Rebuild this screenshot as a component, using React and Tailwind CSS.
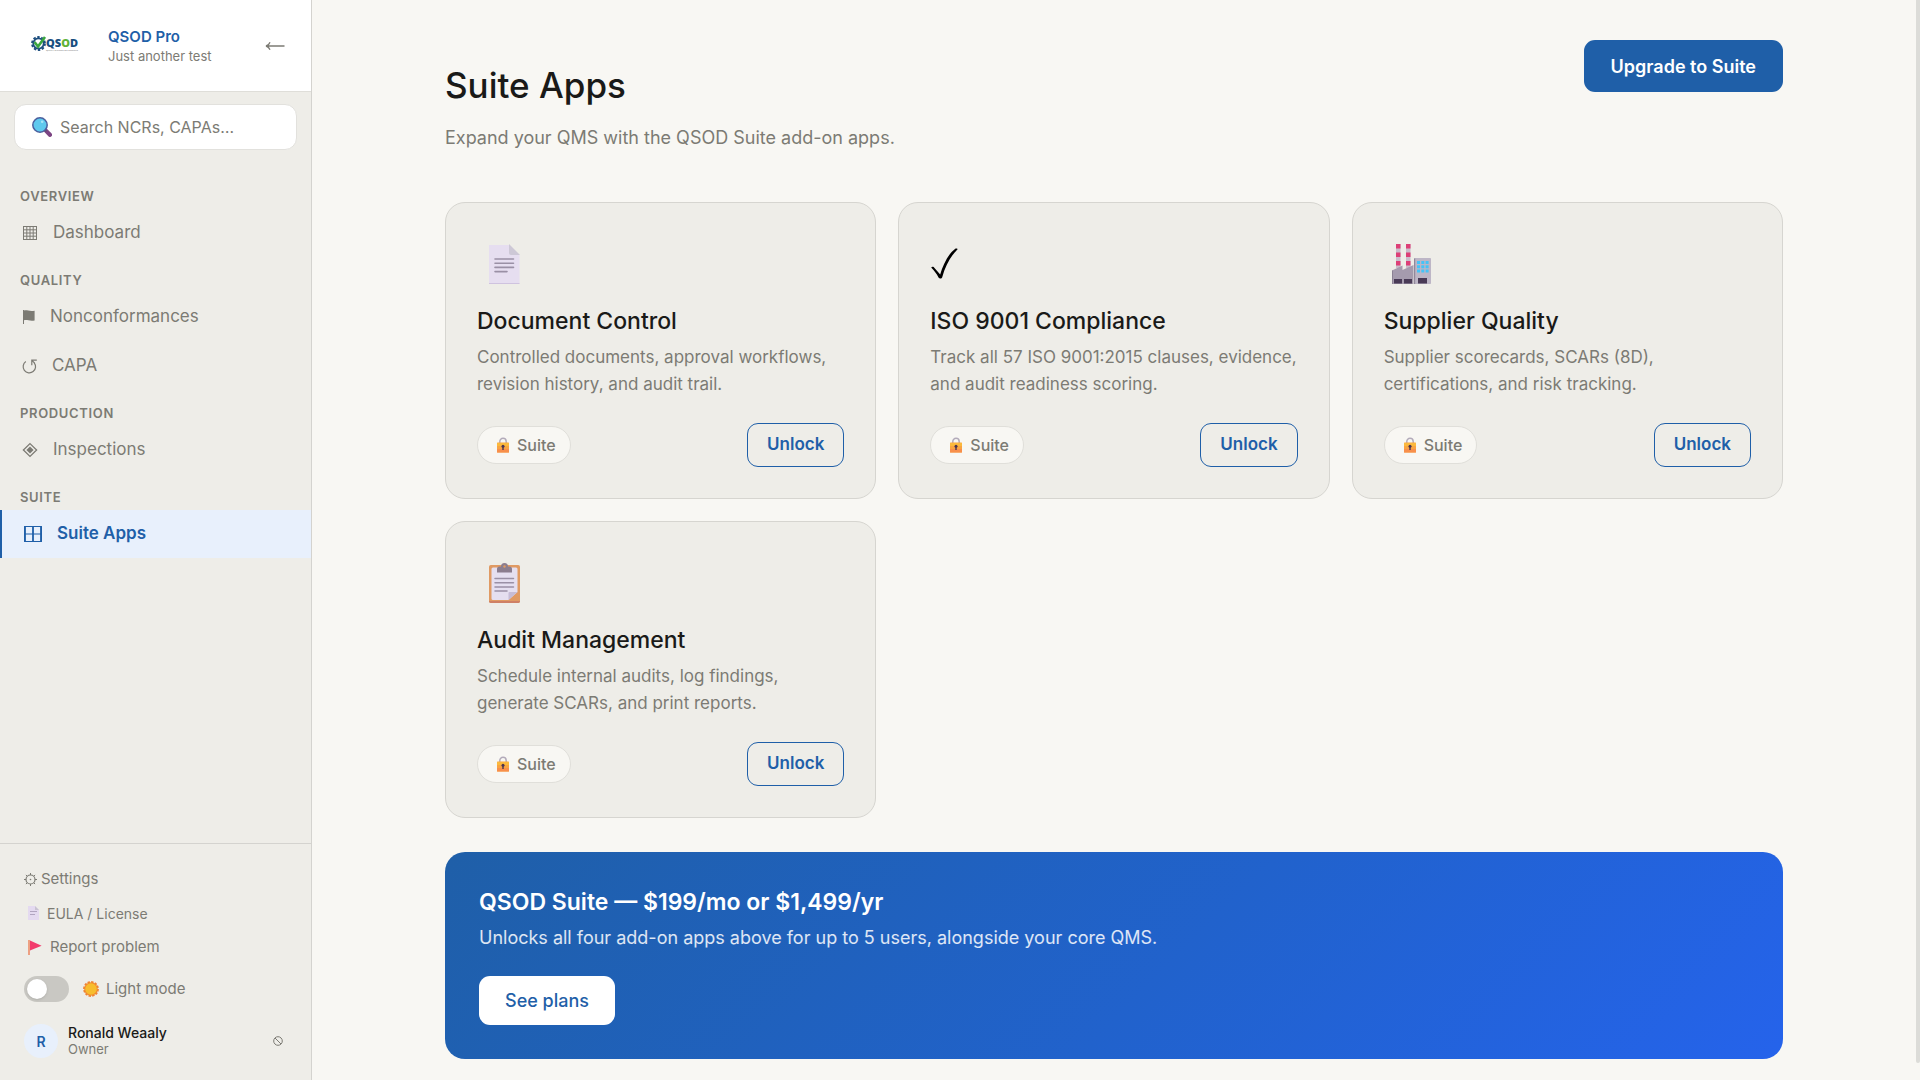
import { useState } from 'react';

/* ---------- Sidebar glyphs ---------- */

function GridGlyph() {
  return (
    <svg width="16" height="16" viewBox="0 0 16 16" fill="none" stroke="currentColor" aria-hidden="true">
      <rect x="1.5" y="1.5" width="13" height="13" />
      <path d="M4.8 1.5v13M8 1.5v13M11.2 1.5v13M1.5 4.8h13M1.5 8h13M1.5 11.2h13" />
    </svg>
  );
}

function FlagGlyph() {
  return (
    <svg width="13" height="16" viewBox="0 0 13 16" fill="currentColor" aria-hidden="true">
      <path d="M1 1h1v14H1z" />
      <path d="M2 1.600c3-.9 5 1.200 10.600.2v9.600c-5 1-7.600-1.100-10.600-.2z" />
    </svg>
  );
}

function LoopGlyph() {
  return (
    <svg width="15" height="16" viewBox="0 0 15 16" fill="none" stroke="currentColor" strokeWidth="1.2" aria-hidden="true">
      <path d="M3.800 3.600A6.200 6.200 0 1 0 12.200 4.800" />
      <path d="M14.800 2.200H9.800v5M9.800 2.200l3 3.200" />
    </svg>
  );
}

function DiamondGlyph() {
  return (
    <svg width="16" height="16" viewBox="0 0 16 16" aria-hidden="true">
      <path d="M8 1.600 14.600 8 8 14.400 1.400 8z" fill="none" stroke="currentColor" strokeWidth="1.300" />
      <path d="M8 4.400 11.600 8 8 11.600 4.400 8z" fill="currentColor" />
    </svg>
  );
}

function WindowGlyph() {
  return (
    <svg width="18" height="18" viewBox="0 0 18 18" fill="none" stroke="currentColor" aria-hidden="true">
      <path d="M.5 1.500h17v15H.5zM.5 9h17" />
      <path d="M1 1v16M9 1v16M17 1v16" strokeWidth="1.800" />
    </svg>
  );
}

function ArrowLeft() {
  return (
    <svg width="20" height="10" viewBox="0 0 20 10" fill="none" stroke="currentColor" strokeWidth="1.300" aria-hidden="true">
      <path d="M1 5h18.500M5 1.200C4.200 3.400 3 4.500 1 5c2 .5 3.200 1.600 4 3.800" />
    </svg>
  );
}

function GearGlyph() {
  return (
    <svg width="13" height="13" viewBox="0 0 13 13" fill="none" stroke="currentColor" aria-hidden="true">
      <circle cx="6.500" cy="6.500" r="4.500" strokeWidth="1.200" />
      <circle cx="6.500" cy="6.500" r=".8" fill="currentColor" stroke="none" />
      <path d="M6.500 0v2M6.500 11v2M0 6.500h2M11 6.500h2M1.900 1.900l1.400 1.400M9.700 9.700l1.400 1.400M1.900 11.100l1.400-1.400M9.700 3.300l1.400-1.400" />
    </svg>
  );
}

function NoEntryGlyph() {
  return (
    <svg width="10" height="10" viewBox="0 0 10 10" fill="none" stroke="currentColor" aria-hidden="true">
      <circle cx="5" cy="5" r="4.300" />
      <path d="M2 2l6 6" />
    </svg>
  );
}

/* ---------- Colour icons ---------- */

function Magnifier() {
  return (
    <svg width="20" height="20" viewBox="0 0 20 20" className="shrink-0" aria-hidden="true">
      <path d="M13 12.500l1.600-1 4.800 4.700a2.100 2.100 0 0 1-3 3.100l-4.500-4.900z" fill="#7c4483" />
      <path d="M12.200 12.200l2.200 2.200" stroke="#5c5070" strokeWidth="1.800" />
      <circle cx="8" cy="8" r="7.200" fill="#5fc9ee" stroke="#4a5f9e" strokeWidth="1.500" />
      <circle cx="10.200" cy="4.800" r="1.300" fill="#a8e6f8" />
    </svg>
  );
}

function PageIcon() {
  return (
    <svg width="31" height="40" viewBox="0 0 31 40" aria-hidden="true">
      <path d="M0 1h20l10.500 10v29H0z" fill="#e6def0" />
      <path d="M0 39h30.500v1H0z" fill="#cfc3df" />
      <path d="M20 0l11 11H22a2 2 0 0 1-2-2z" fill="#cdc8d6" />
      <path d="M6 15h18.500M6 19.200h18.500M6 23.400h18.500M6 27.600h12" stroke="#9a90a5" strokeWidth="1.600" strokeLinecap="round" />
    </svg>
  );
}

function SmallPage() {
  return (
    <svg width="11" height="14" viewBox="0 0 11 14" aria-hidden="true">
      <path d="M0 0h7l4 4v10H0z" fill="#e4daf0" />
      <path d="M7 0l4 4H7z" fill="#c9c3d2" />
      <path d="M2 5.500h7M2 8.500h5" stroke="#b1a5c0" strokeWidth="1.200" />
    </svg>
  );
}

function RedFlag() {
  return (
    <svg width="14" height="15" viewBox="0 0 14 15" aria-hidden="true">
      <path d="M0 0h2v15H0z" fill="#eda082" />
      <path d="M2 .5l11.600 5.200L2 10.600z" fill="#f23b6c" />
    </svg>
  );
}

function Sun() {
  return (
    <svg width="16" height="16" viewBox="0 0 16 16" aria-hidden="true">
      <circle cx="8" cy="8" r="7" fill="none" stroke="#ef8232" strokeWidth="1.800" strokeDasharray="2.400 1.260" />
      <circle cx="8" cy="8" r="6.800" fill="#f08a30" />
      <circle cx="8" cy="8" r="5.800" fill="#f7bd2e" />
    </svg>
  );
}

function Lock() {
  return (
    <svg width="12" height="16" viewBox="0 0 12 16" aria-hidden="true">
      <path d="M2.800 7V4.500a3.200 3.200 0 0 1 6.400 0V7" fill="none" stroke="#b3abba" strokeWidth="1.500" />
      <rect y="5.500" width="12" height="10" rx=".6" fill="#f9a441" />
      <path d="M0 12h12v3a.6.600 0 0 1-.6.500H.6A.6.600 0 0 1 0 15z" fill="#f88f4b" />
      <path d="M0 6h12v3H0z" fill="#fbb93c" />
      <circle cx="6" cy="9.300" r="1.500" fill="#4b3450" />
      <path d="M5.300 9.500h1.400v3.500H5.300z" fill="#4b3450" />
    </svg>
  );
}

function Check() {
  return (
    <svg width="28" height="40" viewBox="0 0 28 40" fill="#000" aria-hidden="true">
      <path d="M1.200 23.600c1-1.500 2.500-.8 3.300.3l5.700 6.700C13 20.700 18.500 9.500 25 4.900c1-.6 2.500-.3 2.600.3C21 11.500 15 22.500 12.300 32.900c-.6 1.900-2.900 1.900-3.800.5-1.800-3.200-4-6.600-7.300-9.800z" />
    </svg>
  );
}

function Factory() {
  return (
    <svg width="39" height="40" viewBox="0 0 39 40" aria-hidden="true">
      <path d="M4 0h4.500v24H4zM14 0h4.500v24H14z" fill="#c9bccb" />
      <path d="M4 0h4.500v4.500H4zM4 8.500h4.500V13H4zM4 17h4.500v4.500H4zM14 0h4.500v4.500H14zM14 8.500h4.500V13H14zM14 17h4.500v4.500H14z" fill="#dd3f77" />
      <path d="M0 26.500l10.500-5V26l11-5v19H0z" fill="#a59bae" />
      <path d="M0 26.500h1V40H0z" fill="#8b8194" />
      <rect x="22" y="14" width="17" height="26" rx=".8" fill="#bdb6c6" />
      <path d="M22 14.500h1.200V40H22z" fill="#91889b" />
      <path d="M25 17h3v3h-3zM29.300 17h3v3h-3zM33.600 17h3v3h-3zM25 21.200h3v3h-3zM29.300 21.200h3v3h-3zM33.600 21.200h3v3h-3zM25 25.400h3v3h-3zM29.300 25.400h3v3h-3zM33.600 25.400h3v3h-3z" fill="#45c3f7" />
      <path d="M2 35h8v4.500H2zM12 35h8v4.500h-8zM26 34h9v5.500h-9z" fill="#493a56" />
    </svg>
  );
}

function Clipboard() {
  return (
    <svg width="31" height="40" viewBox="0 0 31 40" aria-hidden="true">
      <rect y="2" width="31" height="38" rx="1.800" fill="#e09a63" />
      <path d="M0 38h31c0 1.300-.8 2-1.800 2H1.800C.8 40 0 39.300 0 38z" fill="#cf8065" />
      <path d="M2.500 6a1.500 1.500 0 0 1 1.500-1.500h23A1.500 1.500 0 0 1 28.500 6v23l-9 8H4a1.500 1.500 0 0 1-1.500-1.500z" fill="#e5dff0" />
      <path d="M28.500 29l-9 8v-7a1 1 0 0 1 1-1z" fill="#c6bcd6" />
      <path d="M8 9.500V6a2.500 2.500 0 0 1 2.500-2.500H12a3.500 3.500 0 0 1 7 0h1.500A2.500 2.500 0 0 1 23 6v3.500z" fill="#8b7d8e" />
      <circle cx="15.500" cy="3.500" r="1.200" fill="#e09a63" />
      <path d="M6 15.500h18.500M6 19.700h18.500M6 23.900h18.500M6 28.100h12" stroke="#9a90a5" strokeWidth="1.500" strokeLinecap="round" />
    </svg>
  );
}

function Logo() {
  return (
    <svg width="76" height="50" viewBox="0 0 76 50" className="bg-white" role="img" aria-label="QSOD">
      <circle cx="18.500" cy="22.500" r="6.500" fill="none" stroke="#1d4e7e" strokeWidth="1.800" strokeDasharray="2.500 1.580" />
      <circle cx="18.500" cy="22.500" r="5.200" fill="#fff" stroke="#1d4e7e" strokeWidth="1.800" />
      <path d="M14.500 21l3.500 4.500L25 16" fill="none" stroke="#3aa63f" strokeWidth="2.600" />
      <text x="26" y="26" fontSize="11" fontWeight="800" fill="#184f80" className="font-['Open_Sans']">
        QS<tspan fill="#5fb238">O</tspan>D
      </text>
      <text x="26" y="30" fontSize="2.400" fill="#777" className="font-['Open_Sans']">
        Quality Systems On Demand
      </text>
    </svg>
  );
}

/* ---------- Data ---------- */

const NAV = [
  { label: 'Overview', items: [{ name: 'Dashboard', Glyph: GridGlyph }] },
  {
    label: 'Quality',
    items: [
      { name: 'Nonconformances', Glyph: FlagGlyph },
      { name: 'CAPA', Glyph: LoopGlyph },
    ],
  },
  { label: 'Production', items: [{ name: 'Inspections', Glyph: DiamondGlyph }] },
  { label: 'Suite', items: [{ name: 'Suite Apps', Glyph: WindowGlyph, active: true }] },
];

const APPS = [
  {
    title: 'Document Control',
    text: 'Controlled documents, approval workflows, revision history, and audit trail.',
    icon: <span className="ml-3"><PageIcon /></span>,
  },
  {
    title: 'ISO 9001 Compliance',
    text: 'Track all 57 ISO 9001:2015 clauses, evidence, and audit readiness scoring.',
    icon: <Check />,
  },
  {
    title: 'Supplier Quality',
    text: 'Supplier scorecards, SCARs (8D), certifications, and risk tracking.',
    icon: <span className="ml-2"><Factory /></span>,
  },
  {
    title: 'Audit Management',
    text: 'Schedule internal audits, log findings, generate SCARs, and print reports.',
    icon: <span className="ml-3"><Clipboard /></span>,
  },
];

/* ---------- Sections ---------- */

function NavItem({ name, Glyph, active }) {
  return (
    <a
      href="#"
      aria-current={active ? 'page' : undefined}
      className={
        active
          ? 'flex h-12 items-center gap-[15px] border-l-2 border-[#1f5fa8] bg-[#e8f0fc] pl-[22px] text-[17px] font-semibold text-[#1f5fa8]'
          : 'flex h-12 items-center gap-[15px] pl-[22px] text-[17px] text-[#7c7b74]'
      }
    >
      <Glyph />
      {name}
    </a>
  );
}

function Sidebar() {
  const [dark, setDark] = useState(false);

  return (
    <aside className="flex w-[312px] shrink-0 flex-col border-r border-[#d4d3cf] bg-[#eeede8] text-[#7c7b74]">
      <div className="flex h-[92px] items-center border-b border-[#dfded9] bg-white pr-[26px] pl-5">
        <Logo />
        <div className="ml-3 flex-1">
          <p className="text-[15px] leading-5 font-semibold text-[#1f5fa8]">QSOD Pro</p>
          <p className="text-[13px] leading-[18px]">Just another test</p>
        </div>
        <button aria-label="Collapse sidebar">
          <ArrowLeft />
        </button>
      </div>

      <label className="mx-[14px] mt-3 flex h-[46px] items-center gap-2 rounded-xl border border-[#e2e1dd] bg-white pl-[17px]">
        <Magnifier />
        <input
          type="search"
          aria-label="Search"
          placeholder="Search NCRs, CAPAs…"
          className="w-full bg-transparent text-[16px] outline-none placeholder:text-[#7c7b74]"
        />
      </label>

      <nav className="mt-[23px] flex-1">
        {NAV.map((group) => (
          <div key={group.label}>
            <h2 className="flex h-9 items-center px-5 pt-[11px] text-[13px] font-semibold tracking-wider uppercase">
              {group.label}
            </h2>
            <div className="space-y-px">
              {group.items.map((item) => (
                <NavItem key={item.name} {...item} />
              ))}
            </div>
          </div>
        ))}
      </nav>

      <div className="border-t border-[#d4d3cf] px-6 pt-[18px] pb-[22px] text-[15px]">
        <a href="#" className="flex h-[34px] items-center gap-1">
          <GearGlyph />
          Settings
        </a>
        <a href="#" className="flex h-[34px] items-center gap-2 pl-1 text-[14px]">
          <SmallPage />
          EULA / License
        </a>
        <a href="#" className="flex h-[34px] items-center gap-2 pl-1">
          <RedFlag />
          Report problem
        </a>
        <label className="mt-[10px] flex h-[30px] items-center">
          <input
            type="checkbox"
            checked={dark}
            onChange={(e) => setDark(e.target.checked)}
            className="h-[26px] w-[45px] appearance-none rounded-full bg-[#c9c8c3] p-[3px] before:block before:size-5 before:rounded-full before:bg-white before:shadow checked:bg-[#1f5fa8] checked:before:translate-x-[19px]"
          />
          <span className="ml-[14px] flex items-center gap-[7px]">
            <Sun />
            Light mode
          </span>
        </label>
        <div className="mt-5 flex items-center">
          <span className="grid size-[34px] place-items-center rounded-full bg-[#e8f0fc] text-[14px] font-semibold text-[#1f5fa8]">
            R
          </span>
          <div className="ml-[10px] flex-1">
            <p className="text-[14px] leading-[17px] font-medium text-[#1a1a18]">Ronald Weaaly</p>
            <p className="text-[13px] leading-[17px]">Owner</p>
          </div>
          <button aria-label="Sign out" className="mr-1">
            <NoEntryGlyph />
          </button>
        </div>
      </div>
    </aside>
  );
}

function AppCard({ title, text, icon }) {
  return (
    <article className="flex flex-col rounded-[20px] border border-[#d6d5d0] bg-[#eeede8] px-[31px] pt-[41px] pb-[31px]">
      <div className="flex h-10 items-center">{icon}</div>
      <h2 className="mt-[22px] text-[23px] leading-[30px] font-medium text-[#1a1a18]">{title}</h2>
      <p className="mt-2 text-[17px] leading-[27px] text-[#7c7b74]">{text}</p>
      <div className="mt-[25px] flex items-center justify-between">
        <span className="flex h-[38px] items-center gap-2 rounded-full border border-[#e0dfda] bg-[#f8f7f3] pr-[14px] pl-[19px] text-[16px] font-medium text-[#7c7b74]">
          <Lock />
          Suite
        </span>
        <button className="h-11 rounded-[11px] border border-[#1f5fa8] px-[19px] text-[17px] font-semibold text-[#1f5fa8]">
          Unlock
        </button>
      </div>
    </article>
  );
}

export default function App() {
  return (
    <div className="flex h-screen bg-[#f8f7f3] font-['Inter',sans-serif] text-[#1a1a18]">
      <Sidebar />
      <main className="flex-1 overflow-hidden px-8">
        <div className="mx-auto max-w-[1338px] pt-10">
          <header className="flex items-start justify-between">
            <div className="pt-5">
              <h1 className="text-[35px] leading-[50px] font-medium">Suite Apps</h1>
              <p className="mt-[14px] text-[18px] leading-7 text-[#7c7b74]">
                Expand your QMS with the QSOD Suite add-on apps.
              </p>
            </div>
            <button className="h-[52px] rounded-[11px] bg-[#1f5fa8] px-[27px] text-[18px] font-semibold text-white">
              Upgrade to Suite
            </button>
          </header>

          <section className="mt-[50px] grid grid-cols-3 gap-[22px]">
            {APPS.map((app) => (
              <AppCard key={app.title} {...app} />
            ))}
          </section>

          <section className="mt-[34px] rounded-[20px] bg-linear-135 from-[#1f5fa8] to-[#2563eb] px-[34px] pt-[34px] pb-[34px] text-white">
            <h2 className="text-[23px] leading-8 font-semibold">QSOD Suite — $199/mo or $1,499/yr</h2>
            <p className="mt-[6px] text-[18px] leading-7 text-white/85">
              Unlocks all four add-on apps above for up to 5 users, alongside your core QMS.
            </p>
            <button className="mt-6 h-[49px] rounded-[11px] bg-white px-[26px] text-[18px] font-medium text-[#1f5fa8]">
              See plans
            </button>
          </section>
        </div>
      </main>
      {/* Scroll thumb */}
      <div className="w-1 shrink-0 pb-[17px]" aria-hidden="true">
        <div className="h-full rounded-b-sm bg-[#dcdcd8]" />
      </div>
    </div>
  );
}
